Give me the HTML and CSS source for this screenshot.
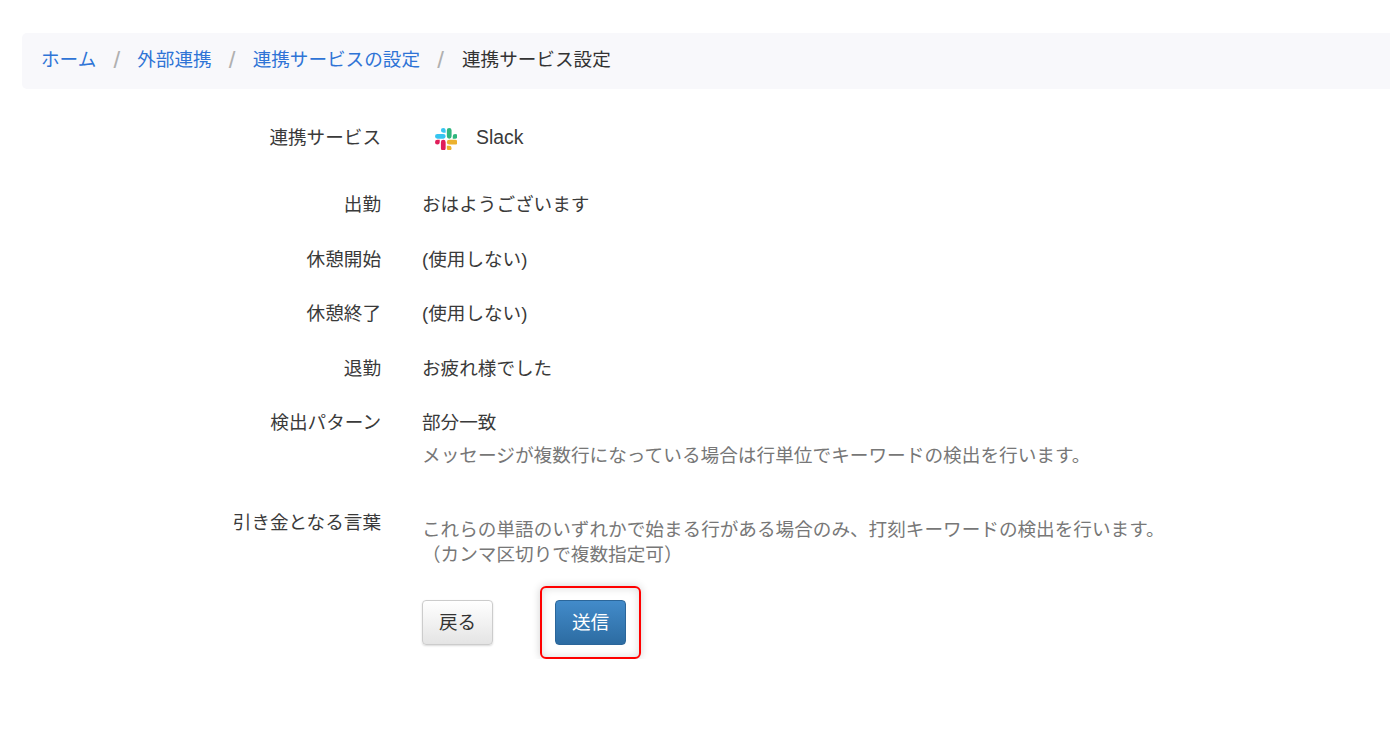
FILE: index.html
```html
<!DOCTYPE html>
<html lang="ja">
<head>
<meta charset="utf-8">
<title>連携サービス設定</title>
<link rel="stylesheet" href="styles.css">
</head>
<body>
<nav class="breadcrumb">
  <a href="#">ホーム</a><span class="sep">/</span>
  <a href="#">外部連携</a><span class="sep">/</span>
  <a href="#">連携サービスの設定</a><span class="sep">/</span>
  <span class="current">連携サービス設定</span>
</nav>
<form class="form">
  <div class="row row-service">
    <div class="label">連携サービス</div>
    <div class="value service">
      <svg class="slack" viewBox="0 0 24 24" aria-hidden="true">
        <path fill="#e01e5a" d="M5.042 15.165a2.528 2.528 0 0 1-2.52 2.523A2.528 2.528 0 0 1 0 15.165a2.527 2.527 0 0 1 2.522-2.52h2.52v2.52zM6.313 15.165a2.527 2.527 0 0 1 2.521-2.52 2.527 2.527 0 0 1 2.521 2.52v6.313A2.528 2.528 0 0 1 8.834 24a2.528 2.528 0 0 1-2.521-2.522v-6.313z"/>
        <path fill="#36c5f0" d="M8.834 5.042a2.528 2.528 0 0 1-2.521-2.52A2.528 2.528 0 0 1 8.834 0a2.528 2.528 0 0 1 2.521 2.522v2.52H8.834zM8.834 6.313a2.528 2.528 0 0 1 2.521 2.521 2.528 2.528 0 0 1-2.521 2.521H2.522A2.528 2.528 0 0 1 0 8.834a2.528 2.528 0 0 1 2.522-2.521h6.312z"/>
        <path fill="#2eb67d" d="M18.956 8.834a2.528 2.528 0 0 1 2.522-2.521A2.528 2.528 0 0 1 24 8.834a2.528 2.528 0 0 1-2.522 2.521h-2.522V8.834zM17.688 8.834a2.528 2.528 0 0 1-2.523 2.521 2.527 2.527 0 0 1-2.52-2.521V2.522A2.527 2.527 0 0 1 15.165 0a2.528 2.528 0 0 1 2.523 2.522v6.312z"/>
        <path fill="#ecb22e" d="M15.165 18.956a2.528 2.528 0 0 1 2.523 2.522A2.528 2.528 0 0 1 15.165 24a2.527 2.527 0 0 1-2.52-2.522v-2.522h2.52zM15.165 17.688a2.527 2.527 0 0 1-2.52-2.523 2.526 2.526 0 0 1 2.52-2.52h6.313A2.527 2.527 0 0 1 24 15.165a2.528 2.528 0 0 1-2.522 2.523h-6.313z"/>
      </svg>
      <span class="latin">Slack</span>
    </div>
  </div>
  <div class="row row-a"><div class="label">出勤</div><div class="value">おはようございます</div></div>
  <div class="row row-a"><div class="label">休憩開始</div><div class="value">(使用しない)</div></div>
  <div class="row row-a"><div class="label">休憩終了</div><div class="value">(使用しない)</div></div>
  <div class="row row-a"><div class="label">退勤</div><div class="value">お疲れ様でした</div></div>
  <div class="row row-pattern">
    <div class="label">検出パターン</div>
    <div class="value">部分一致<p class="help">メッセージが複数行になっている場合は行単位でキーワードの検出を行います。</p></div>
  </div>
  <div class="row row-trigger">
    <div class="label">引き金となる言葉</div>
    <div class="value"><p class="help trigger">これらの単語のいずれかで始まる行がある場合のみ、打刻キーワードの検出を行います。<br>（カンマ区切りで複数指定可）</p></div>
  </div>
  <div class="row actions">
    <div class="label"></div>
    <div class="value buttons">
      <button type="button" class="btn btn-back">戻る</button>
      <span class="highlight"><button type="button" class="btn btn-send">送信</button></span>
    </div>
  </div>
</form>
</body>
</html>
```

FILE: styles.css
```css
* { box-sizing: border-box; }
html, body { margin: 0; background: #fff; }
body {
  padding: 33px 0 0 22px;
  font-family: "Liberation Sans", "Noto Sans CJK JP", sans-serif;
  font-size: 18.6px;
  line-height: 27px;
  color: #3a3a3a;
}
.breadcrumb {
  display: flex;
  align-items: center;
  height: 56px;
  padding: 0 0 3px 19px;
  background: #f8f8fb;
  border-radius: 5px 0 0 5px;
}
.breadcrumb a { color: #2f74d6; text-decoration: none; }
.sep { width: 41px; text-align: center; color: #b0b0b0; font-size: 24px; }
.current { margin-left: 1px; color: #333; }
.form { display: flex; flex-direction: column; }
.row { display: grid; grid-template-columns: 359px 1fr; column-gap: 41px; }
.label { text-align: right; }
.row-service { margin-top: 35px; height: 67px; }
.row-a { height: 54.6px; }
.service { display: flex; align-items: center; height: 27px; padding-left: 12.5px; }
.slack { width: 22.5px; height: 22.5px; margin: 3px 19px 0 0; }
.latin { font-size: 19.4px; }
.help { margin: 6px 0 0; font-size: 18.66px; color: #777; line-height: 27px; }
.row-pattern { height: 100px; }
.row-trigger { height: 77px; }
.trigger { margin-top: 8px; line-height: 25px; font-size: 18.63px; }
.buttons { display: flex; align-items: center; }
.btn {
  width: 71px;
  height: 45px;
  padding: 0;
  border-radius: 4px;
  font: inherit;
  cursor: pointer;
}
.btn-back {
  background: linear-gradient(#fff, #e4e4e4);
  border: 1px solid #ccc;
  color: #333;
  box-shadow: 0 1px 2px rgba(0, 0, 0, .15);
}
.btn-send {
  background: linear-gradient(#428bca, #2d6ca2);
  border: 1px solid #2b669a;
  color: #fff;
  display: block;
}
.highlight {
  display: block;
  margin-left: 47px;
  padding: 12px 13px;
  border: 2px solid #f00;
  border-radius: 6px;
  box-shadow: 0 0 8px rgba(0, 0, 0, .18), inset 0 0 8px rgba(0, 0, 0, .15);
}
```
